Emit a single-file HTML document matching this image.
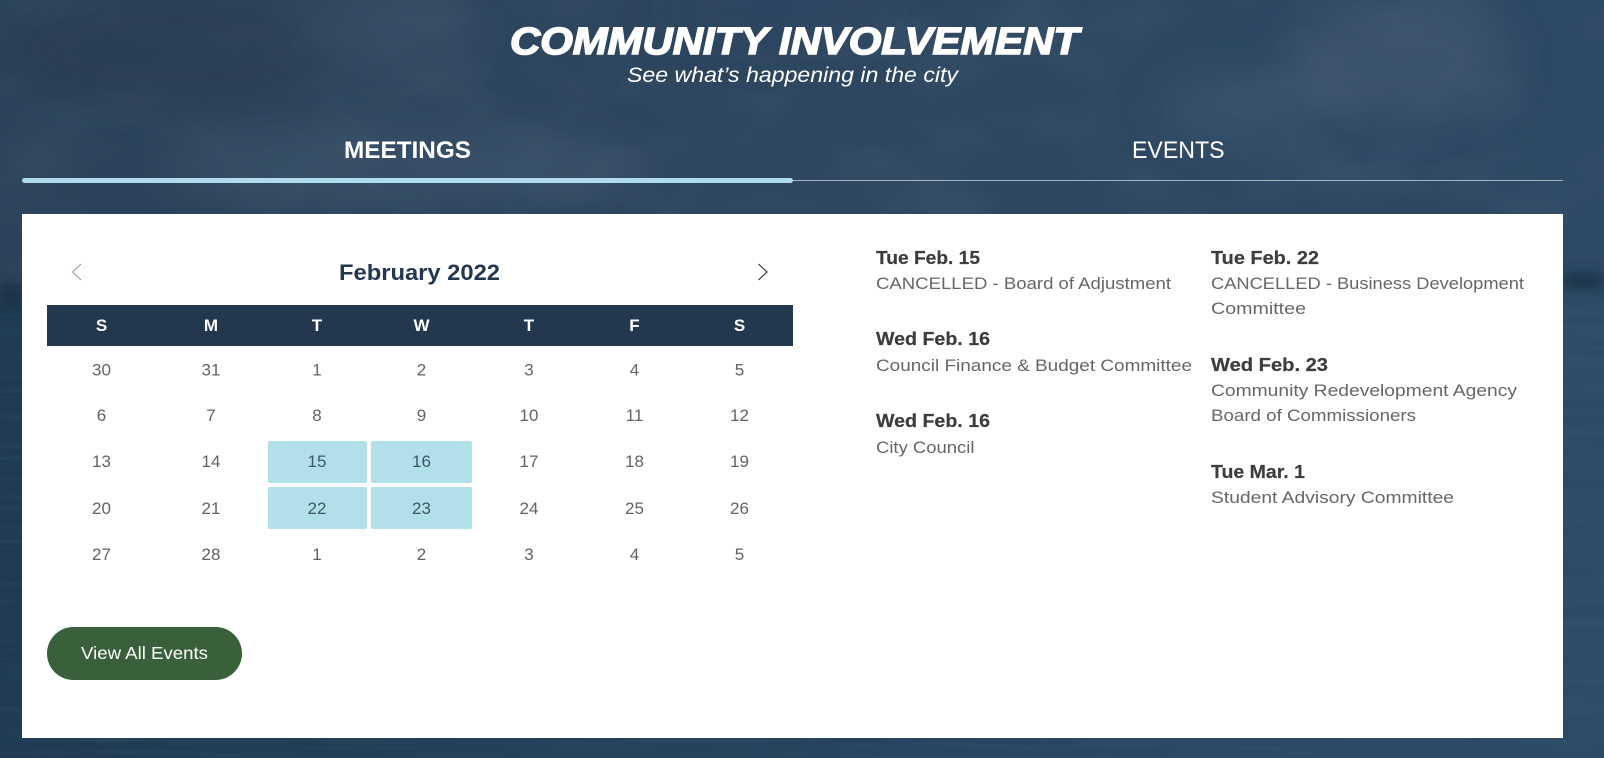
<!DOCTYPE html>
<html lang="en">
<head>
<meta charset="utf-8">
<title>Community Involvement</title>
<style>
html,body{margin:0;padding:0;width:1604px;height:758px;overflow:hidden;background:#2d4661}
svg{display:block;position:absolute;left:0;top:0}
text{font-family:"Liberation Sans",sans-serif}
.d{font-size:17px;fill:#636363;text-anchor:middle}
.h{font-size:17px;font-weight:bold;fill:#fff;text-anchor:middle}
.b{font-size:18px;font-weight:bold;fill:#3d3d3d;stroke:#3d3d3d;stroke-width:.2}
.t{font-size:17px;fill:#666}
.x{fill:#3c5866}
</style>
</head>
<body>
<svg width="1604" height="758" viewBox="0 0 1604 758" xmlns="http://www.w3.org/2000/svg">
<defs>
<linearGradient id="sea" x1="0" x2="1" y1="0" y2="0">
<stop offset="0" stop-color="#1f3a52"/><stop offset=".3" stop-color="#233f59"/><stop offset=".7" stop-color="#2a4763"/><stop offset="1" stop-color="#2d4a66"/>
</linearGradient>
<linearGradient id="sky" x1="0" x2="1" y1="0" y2="0">
<stop offset="0" stop-color="#2c425a"/><stop offset=".45" stop-color="#2e465f"/><stop offset="1" stop-color="#2e4965"/>
</linearGradient>
<filter id="bl" x="-30%" y="-30%" width="160%" height="160%"><feGaussianBlur stdDeviation="22"/></filter>
<filter id="bl2" x="-10%" y="-200%" width="120%" height="500%"><feGaussianBlur stdDeviation="5"/></filter>
<filter id="cl" x="0" y="0" width="100%" height="100%">
<feTurbulence type="fractalNoise" baseFrequency=".008 .014" numOctaves="3" seed="7"/>
<feColorMatrix values="0 0 0 0 .5  0 0 0 0 .58  0 0 0 0 .66  1.4 0 0 0 -.62"/>
</filter>
<filter id="wa" x="0" y="0" width="100%" height="100%">
<feTurbulence type="fractalNoise" baseFrequency=".006 .16" numOctaves="3" seed="3"/>
<feColorMatrix values="0 0 0 0 .05  0 0 0 0 .13  0 0 0 0 .2  1.8 0 0 0 -.7"/>
</filter>
</defs>

<rect width="1604" height="290" fill="url(#sky)"/>
<rect y="285" width="1604" height="473" fill="url(#sea)"/>
<rect width="1604" height="290" filter="url(#cl)" opacity=".1"/>
<rect y="285" width="1604" height="473" filter="url(#wa)" opacity=".25"/>

<g filter="url(#bl)">
<ellipse cx="170" cy="50" rx="170" ry="55" fill="#25394f" opacity=".55"/>
<ellipse cx="390" cy="30" rx="90" ry="50" fill="#4a5d74" opacity=".3"/>
<ellipse cx="400" cy="165" rx="240" ry="40" fill="#4b6077" opacity=".35"/>
<ellipse cx="1400" cy="60" rx="110" ry="60" fill="#4d627a" opacity=".4"/>
<ellipse cx="1230" cy="110" rx="70" ry="35" fill="#47607a" opacity=".4"/>
<ellipse cx="780" cy="10" rx="120" ry="30" fill="#2b4663" opacity=".6"/>
</g>
<rect x="0" y="282" width="22" height="26" fill="#1c3347" opacity=".7" filter="url(#bl2)"/>
<rect x="1563" y="272" width="41" height="18" fill="#1e374e" filter="url(#bl2)"/>

<!-- header -->
<text x="510" y="54" font-size="38" font-weight="bold" font-style="italic" fill="#fff" stroke="#fff" stroke-width="1.5" textLength="569" lengthAdjust="spacingAndGlyphs">COMMUNITY INVOLVEMENT</text>
<text x="627" y="82" font-size="21" font-style="italic" fill="#fff" textLength="331" lengthAdjust="spacingAndGlyphs">See what’s happening in the city</text>

<!-- tabs -->
<text x="344" y="158" font-size="24" font-weight="bold" fill="#fff" textLength="127" lengthAdjust="spacingAndGlyphs">MEETINGS</text>
<text x="1132" y="158" font-size="24" fill="#fff" textLength="92.5" lengthAdjust="spacingAndGlyphs">EVENTS</text>
<rect x="793" y="180" width="770" height="1" fill="#a5b2bf"/>
<rect x="22" y="178" width="771" height="5" rx="2.5" fill="#aedcec"/>

<!-- panel -->
<rect x="22" y="214" width="1541" height="524" fill="#fff"/>

<!-- calendar head -->
<path d="M81 264 L72.5 272 L81 280" fill="none" stroke="#999" stroke-width="1.1"/>
<path d="M758.5 264 L767 272 L758.5 280" fill="none" stroke="#333" stroke-width="1.2"/>
<text x="339" y="280" font-size="22" font-weight="bold" fill="#23374f" textLength="161" lengthAdjust="spacingAndGlyphs">February 2022</text>

<rect x="47" y="305" width="746" height="41" fill="#23374f"/>
<text class="h" x="101.500" y="331">S</text>
<text class="h" x="211" y="331">M</text>
<text class="h" x="317" y="331">T</text>
<text class="h" x="421.500" y="331">W</text>
<text class="h" x="529" y="331">T</text>
<text class="h" x="634.500" y="331">F</text>
<text class="h" x="739.500" y="331">S</text>

<!-- highlighted -->
<rect x="268" y="441" width="99" height="42" rx="2" fill="#b1e0e8"/>
<rect x="371" y="441" width="101" height="42" rx="2" fill="#b1e0e8"/>
<rect x="268" y="487" width="99" height="42" rx="2" fill="#b1e0e8"/>
<rect x="371" y="487" width="101" height="42" rx="2" fill="#b1e0e8"/>

<!-- days -->
<g>
<text class="d" x="101.500" y="375.500">30</text>
<text class="d" x="211" y="375.500">31</text>
<text class="d" x="317" y="375.500">1</text>
<text class="d" x="421.500" y="375.500">2</text>
<text class="d" x="529" y="375.500">3</text>
<text class="d" x="634.500" y="375.500">4</text>
<text class="d" x="739.500" y="375.500">5</text>
</g>
<g>
<text class="d" x="101.500" y="421">6</text>
<text class="d" x="211" y="421">7</text>
<text class="d" x="317" y="421">8</text>
<text class="d" x="421.500" y="421">9</text>
<text class="d" x="529" y="421">10</text>
<text class="d" x="634.500" y="421">11</text>
<text class="d" x="739.500" y="421">12</text>
</g>
<g>
<text class="d" x="101.500" y="467">13</text>
<text class="d" x="211" y="467">14</text>
<text class="d x" x="317" y="467">15</text>
<text class="d x" x="421.500" y="467">16</text>
<text class="d" x="529" y="467">17</text>
<text class="d" x="634.500" y="467">18</text>
<text class="d" x="739.500" y="467">19</text>
</g>
<g>
<text class="d" x="101.500" y="514">20</text>
<text class="d" x="211" y="514">21</text>
<text class="d x" x="317" y="514">22</text>
<text class="d x" x="421.500" y="514">23</text>
<text class="d" x="529" y="514">24</text>
<text class="d" x="634.500" y="514">25</text>
<text class="d" x="739.500" y="514">26</text>
</g>
<g>
<text class="d" x="101.500" y="560">27</text>
<text class="d" x="211" y="560">28</text>
<text class="d" x="317" y="560">1</text>
<text class="d" x="421.500" y="560">2</text>
<text class="d" x="529" y="560">3</text>
<text class="d" x="634.500" y="560">4</text>
<text class="d" x="739.500" y="560">5</text>
</g>

<!-- button -->
<rect x="47" y="627" width="195" height="53" rx="26.500" fill="#3a5f3b"/>
<text x="81" y="659" font-size="17.500" fill="#fff" textLength="127" lengthAdjust="spacingAndGlyphs">View All Events</text>

<!-- col 1 -->
<text class="b" x="876" y="264" textLength="104" lengthAdjust="spacingAndGlyphs">Tue Feb. 15</text>
<text class="t" x="876" y="289" textLength="295" lengthAdjust="spacingAndGlyphs">CANCELLED - Board of Adjustment</text>
<text class="b" x="876" y="345" textLength="114" lengthAdjust="spacingAndGlyphs">Wed Feb. 16</text>
<text class="t" x="876" y="371" textLength="316" lengthAdjust="spacingAndGlyphs">Council Finance &amp; Budget Committee</text>
<text class="b" x="876" y="427" textLength="114" lengthAdjust="spacingAndGlyphs">Wed Feb. 16</text>
<text class="t" x="876" y="453" textLength="98.500" lengthAdjust="spacingAndGlyphs">City Council</text>

<!-- col 2 -->
<text class="b" x="1211" y="264" textLength="108" lengthAdjust="spacingAndGlyphs">Tue Feb. 22</text>
<text class="t" x="1211" y="289" textLength="313" lengthAdjust="spacingAndGlyphs">CANCELLED - Business Development</text>
<text class="t" x="1211" y="314" textLength="95" lengthAdjust="spacingAndGlyphs">Committee</text>
<text class="b" x="1211" y="371" textLength="117" lengthAdjust="spacingAndGlyphs">Wed Feb. 23</text>
<text class="t" x="1211" y="396" textLength="306" lengthAdjust="spacingAndGlyphs">Community Redevelopment Agency</text>
<text class="t" x="1211" y="421" textLength="205" lengthAdjust="spacingAndGlyphs">Board of Commissioners</text>
<text class="b" x="1211" y="478" textLength="94" lengthAdjust="spacingAndGlyphs">Tue Mar. 1</text>
<text class="t" x="1211" y="503" textLength="243" lengthAdjust="spacingAndGlyphs">Student Advisory Committee</text>
</svg>
</body>
</html>
